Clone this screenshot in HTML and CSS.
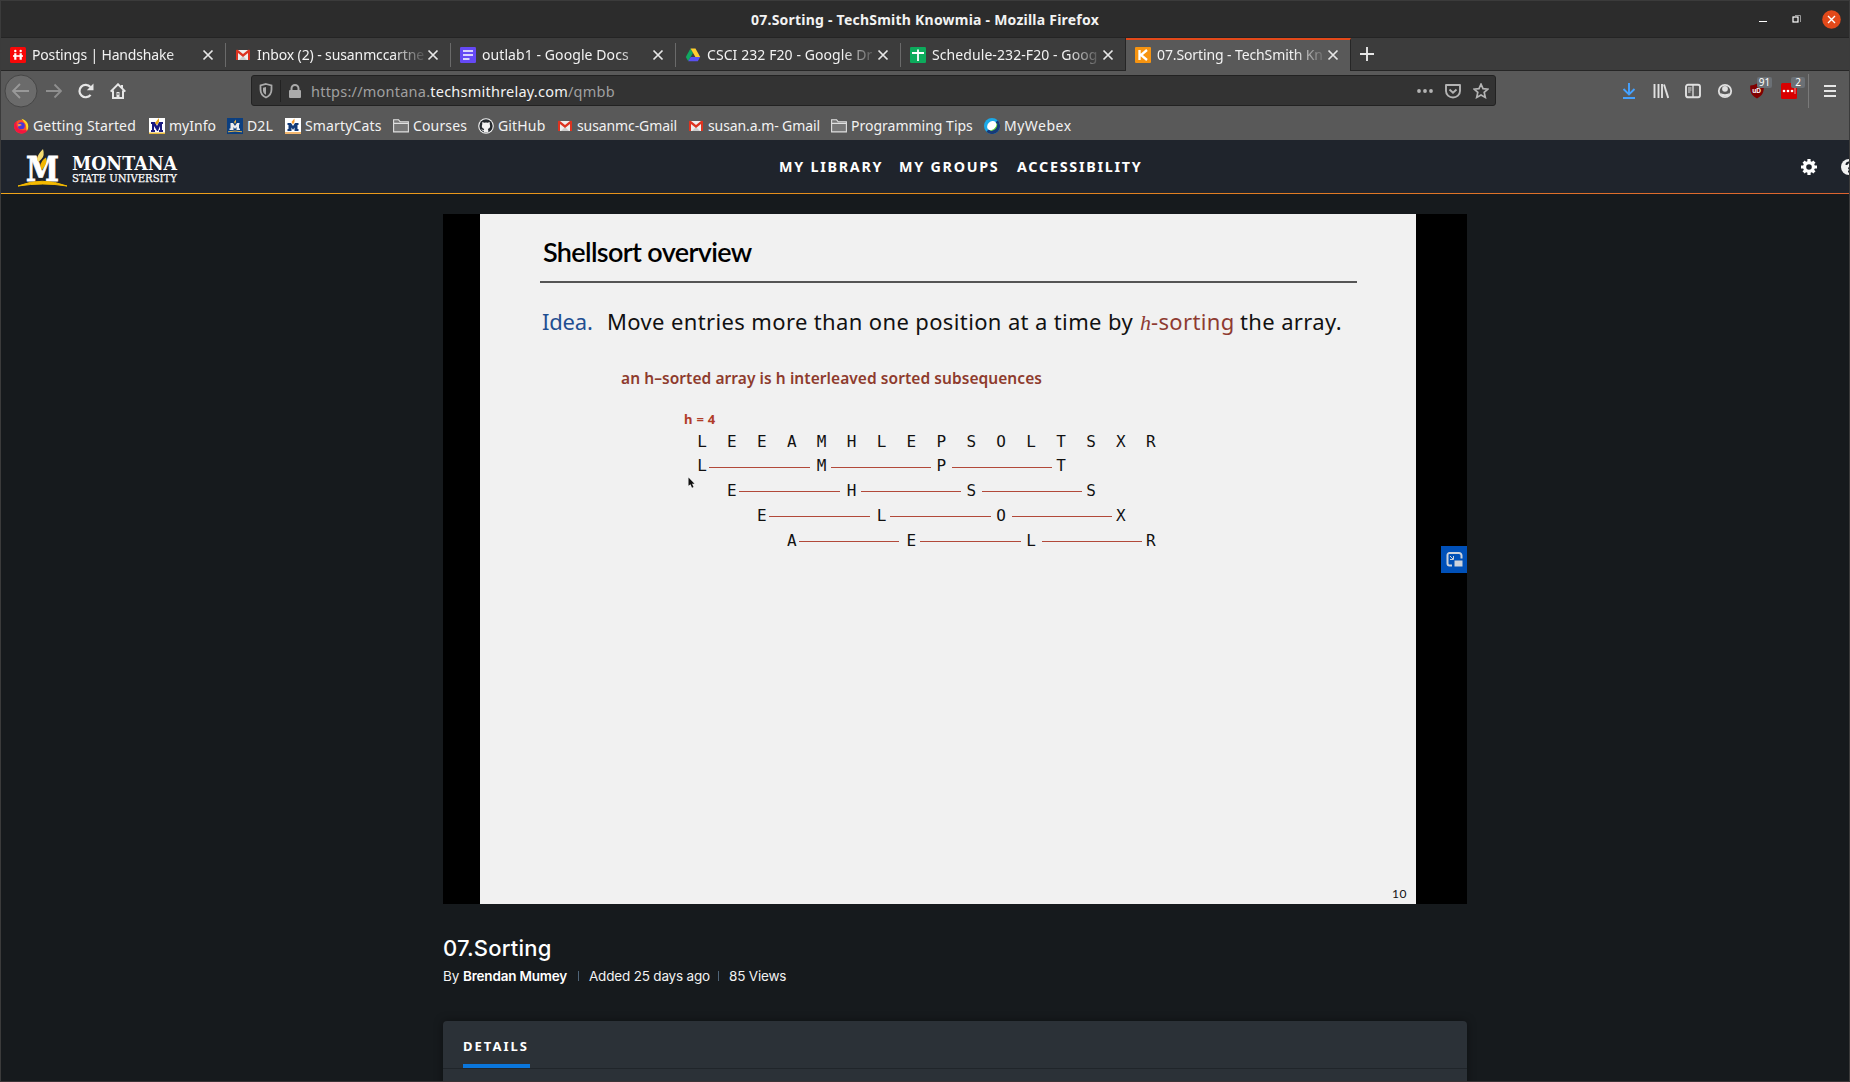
FILE: index.html
```html
<!DOCTYPE html>
<html lang="en">
<head>
<meta charset="utf-8">
<title>07.Sorting - TechSmith Knowmia</title>
<link rel="stylesheet" href="styles.css">
</head>
<body>
<svg class="defs" width="0" height="0" aria-hidden="true">
  <symbol id="close" viewBox="0 0 12 12"><path d="M1.5 1.5l9 9M10.5 1.5l-9 9" stroke="#e6e6e6" stroke-width="1.7" fill="none"/></symbol>
  <symbol id="gmail" viewBox="0 0 16 16"><path d="M2 3h12v10H2z" fill="#eee"/><path d="M4 13l4-4 4 4z" fill="#ccc"/><path d="M1 3.5C1 2.5 2.2 2.4 3 3l5 4 5-4c.8-.6 2-.5 2 .5V13h-2V6L8 10 3 6v7H1z" fill="#dd3320"/></symbol>
  <symbol id="folder" viewBox="0 0 16 16"><path d="M.6 13.9V1.8h5l1.6 2h8.2v10.1zM.6 5.4h14.8" fill="#fff" fill-opacity=".18" stroke="#e0e0e0" stroke-width="1.1"/></symbol>
</svg>

<div class="titlebar">
  <span class="t window-title">07.Sorting - TechSmith Knowmia - Mozilla Firefox</span>
  <div class="window-buttons">
    <svg width="8" height="10"><path d="M0 7.5h8" stroke="#fff"/></svg>
    <svg width="9" height="10"><path d="M3 1.5h5.5V8" stroke="#999" fill="none"/><rect x="1" y="3" width="5" height="5" fill="none" stroke="#fff" stroke-width="1.2"/></svg>
    <svg width="19" height="19"><circle cx="9.5" cy="9.5" r="9.3" fill="#e2491a"/><path d="M6 6l7 7M13 6l-7 7" stroke="#fff" stroke-width="1.4"/></svg>
  </div>
</div>

<div class="tabs">
  <div class="tab"><svg class="fav" viewBox="0 0 16 16"><rect width="16" height="16" rx="1.5" fill="#f80808"/><path d="M5.300 6.300v6.500M10.700 6.300v6.500" stroke="#fff" stroke-width="2.200"/><path d="M3 9h10" stroke="#fff" stroke-width="1.600"/><circle cx="5.300" cy="4" r="1.200" fill="#fff"/><circle cx="10.700" cy="4" r="1.200" fill="#fff"/></svg><span class="label"><span class="t">Postings | Handshake</span></span><svg class="x"><use href="#close"/></svg></div>
  <div class="tab"><svg class="fav"><use href="#gmail"/></svg><span class="label"><span class="t">Inbox (2) - susanmccartne</span></span><svg class="x"><use href="#close"/></svg></div>
  <div class="tab"><svg class="fav" viewBox="0 0 16 16"><rect width="16" height="16" rx="1.2" fill="#6549f5"/><path d="M3 4h10M3 8h10M3 12h6.5" stroke="#fff" stroke-width="1.7"/></svg><span class="label"><span class="t">outlab1 - Google Docs</span></span><svg class="x"><use href="#close"/></svg></div>
  <div class="tab"><svg class="fav" viewBox="0 0 16 16"><path d="M5.5 1.5L.8 10l2.4 4.3L8 6z" fill="#11a861"/><path d="M5.5 1.5h5L15.2 10h-4.8z" fill="#ffce2e"/><path d="M5.7 10h9.5l-2.4 4.3H3.2z" fill="#5a50f0"/></svg><span class="label"><span class="t">CSCI 232 F20 - Google Dr</span></span><svg class="x"><use href="#close"/></svg></div>
  <div class="tab plain"><svg class="fav" viewBox="0 0 16 16"><rect width="16" height="16" rx="1.2" fill="#0cab5c"/><path d="M2 6h12M8 2.5v11.5" stroke="#fff" stroke-width="1.8"/></svg><span class="label"><span class="t">Schedule-232-F20 - Goog</span></span><svg class="x"><use href="#close"/></svg></div>
  <div class="tab active"><svg class="fav" viewBox="0 0 16 16"><rect width="16" height="16" rx="1" fill="#f79410"/><path d="M4.500 3v10M12 3L6 8l6 5" stroke="#fff" stroke-width="2.300" fill="none"/></svg><span class="label"><span class="t">07.Sorting - TechSmith Kn</span></span><svg class="x"><use href="#close"/></svg></div>
  <svg class="plus" width="14" height="14"><path d="M7 0v14M0 7h14" stroke="#e6e6e6" stroke-width="1.9"/></svg>
</div>

<div class="toolbar">
  <div class="nav-buttons">
    <svg class="back" width="34" height="34"><circle cx="17" cy="17" r="16" fill="#6b6b6b" stroke="#464646"/><path d="M25 17H10M16 10l-7 7 7 7" fill="none" stroke="#999" stroke-width="1.8"/></svg>
    <svg width="16" height="16"><path d="M0 8h14M8.500 1.500L15 8l-6.500 6.500" fill="none" stroke="#8f8f8f" stroke-width="1.800"/></svg>
    <svg class="reload" width="16" height="16"><path d="M12.600 11.800A6.200 6.200 0 1 1 12.400 4" fill="none" stroke="#e6e6e6" stroke-width="2.200"/><path d="M15.500.5v6.700H8.800z" fill="#e6e6e6"/></svg>
    <svg class="home" width="16" height="16"><path d="M.7 8.600L8 1.300l7.300 7.300M3 7.500V15h10V7.500" fill="none" stroke="#e6e6e6" stroke-width="2"/><path d="M11 2h2v3h-2zM6.500 9h3v6h-3z" fill="#e6e6e6"/><path d="M7.500 10h1v2h-1z" fill="#595959"/></svg>
  </div>
  <div class="urlbar">
    <svg class="shield" width="14" height="16"><path d="M7 1l5.500 1.500v4c0 4-2 6.500-5.500 8-3.500-1.500-5.500-4-5.500-8v-4z" fill="none" stroke="#aaa" stroke-width="1.800"/><path d="M7 4l-3 .8v2.500c0 2 1 3.500 3 4.500z" fill="#aaa"/></svg>
    <span class="url-sep"></span>
    <svg class="lock" width="12" height="14"><rect y="6" width="12" height="8" rx="1" fill="#aaa"/><path d="M2.500 7V4.500a3.500 3.500 0 0 1 7 0V7" fill="none" stroke="#aaa" stroke-width="2"/></svg>
    <span class="url"><span class="t">https://montana.</span><span class="t host">techsmithrelay.com</span><span class="t">/qmbb</span></span>
    <div class="url-actions">
      <svg width="16" height="6"><circle cx="2" cy="3" r="1.900" fill="#b4b4b4"/><circle cx="8" cy="3" r="1.900" fill="#b4b4b4"/><circle cx="14" cy="3" r="1.900" fill="#b4b4b4"/></svg>
      <svg width="16" height="16"><path d="M1 2h14v6a7 6.500 0 0 1-14 0z" fill="none" stroke="#b4b4b4" stroke-width="1.900" stroke-linejoin="round"/><path d="M4.500 6.500L8 9.700l3.500-3.200" fill="none" stroke="#b4b4b4" stroke-width="1.900"/></svg>
      <svg width="16" height="16"><path d="M8 1.200l2 4.500 4.900.5-3.700 3.200 1.100 5L8 12l-4.300 2.400 1.100-5L1.100 6.200 6 5.700z" fill="none" stroke="#b4b4b4" stroke-width="1.700"/></svg>
    </div>
  </div>
  <div class="tools">
    <svg class="tool" viewBox="0 0 16 16"><path d="M8 0v11M2.500 6L8 11.500 13.500 6M2 15h12" fill="none" stroke="#45a1ff" stroke-width="1.900"/></svg>
    <svg class="tool" viewBox="0 0 16 16"><path d="M1.500 1v14M5.500 1v14M9 1v14" stroke="#e0e0e0" stroke-width="1.900"/><path d="M11 1.500L15.200 15" stroke="#e0e0e0" stroke-width="1.900"/></svg>
    <svg class="tool" viewBox="0 0 16 16"><rect x="1" y="1.800" width="14" height="12.500" rx="2" fill="none" stroke="#e0e0e0" stroke-width="1.900"/><path d="M8 2v12" stroke="#e0e0e0" stroke-width="1.300"/><path d="M3 5h3.500M3 7h3.500M3 9h2.500" stroke="#e0e0e0"/></svg>
    <svg class="tool" viewBox="0 0 16 16"><circle cx="8" cy="8" r="6.200" fill="none" stroke="#e0e0e0" stroke-width="1.800"/><circle cx="8" cy="5.800" r="2.900" fill="#e0e0e0"/><path d="M3 9.500c2 2.300 8 2.300 10 0L11 13.500H5z" fill="#e0e0e0"/></svg>
    <div class="ext"><svg class="tool" viewBox="0 0 16 16"><path d="M8 .5c2 1.300 4.500 2 6.800 2 .3 6-1 10-6.800 13C2.200 12.500.9 8.500 1.200 2.500 3.500 2.500 6 1.800 8 .5z" fill="#800000"/><text x="3.200" y="9.800" font-size="6.500" font-weight="bold" fill="#fff" font-family="Inter, sans-serif">uD</text></svg><span class="count">91</span></div>
    <div class="ext"><svg class="tool" viewBox="0 0 16 16"><rect width="16" height="16" rx="1.500" fill="#d80000"/><circle cx="3" cy="8" r="1.300" fill="#fff"/><circle cx="7" cy="8" r="1.300" fill="#fff"/><circle cx="11" cy="8" r="1.300" fill="#fff"/><path d="M14 5v6" stroke="#fff" stroke-opacity=".6"/></svg><span class="count two">2</span></div>
    <span class="tools-sep"></span>
    <svg class="menu" width="12" height="14"><path d="M0 2h12M0 7h12M0 12h12" stroke="#e6e6e6" stroke-width="1.900"/></svg>
  </div>
</div>

<div class="bookmarks">
  <div><svg class="fav" viewBox="0 0 16 16"><circle cx="8.200" cy="8.700" r="6.900" fill="#ff4f2a"/><path d="M1.500 5c-1.500 5 1 10 6.500 10.500 4.500.3 7-2.500 7.400-6C14 13 9 13 6 11 3.500 9 3 6 4 3z" fill="#f5153f"/><path d="M8.500.8c6 1.500 8.500 7 5.500 12-1 .8 0-5-2-7.500z" fill="#ffd926"/><circle cx="8.300" cy="7.800" r="3.500" fill="#4a36d8"/><path d="M4.800 6.500c2-.8 3.500-.3 4 .8-1.500 0-2 1.200-3.500 1.200z" fill="#ff9640"/></svg><span class="t">Getting Started</span></div>
  <div><svg class="fav" viewBox="0 0 16 16"><rect width="16" height="16" fill="#fff"/><path d="M2 4h4l2 4 2-4h4v2h-1v6h1v2h-4v-2h1V8l-2 5H8L5 8v4h1v2H2v-2h1V6H2z" fill="#1c1c80"/><path d="M6 5l4-5v4L8 7z" fill="#eba91a"/><path d="M0 14.500h16V16H0z" fill="#e7b83c"/></svg><span class="t">myInfo</span></div>
  <div><svg class="fav" viewBox="0 0 16 16"><rect width="16" height="16" fill="#0b3f80"/><path d="M3.500 5H6l2 3 2-3h2.500v1.500H12v4h1V12H9.500V9L8 11 6.500 9v3h-4v-1.500h1v-4z" fill="#eee"/><path d="M7 4l2-2.500V4L8 6z" fill="#f0b23c"/><path d="M1 13.800q7-1.500 14 0" stroke="#e0b048" fill="none"/></svg><span class="t">D2L</span></div>
  <div><svg class="fav" viewBox="0 0 16 16"><rect width="16" height="16" fill="#fff"/><path d="M2.500 5H6l2 3 2-3h3.500v2h-1v4h1v2H9.500V9.500L8 12 6.500 9.500V13h-4v-2h1V7h-1z" fill="#123a78"/><path d="M6.500 4l3-3.500V4L8 6.500z" fill="#f29b30"/><path d="M0 15h16" stroke="#f0a040" stroke-width="1.500"/></svg><span class="t">SmartyCats</span></div>
  <div><svg class="fav"><use href="#folder"/></svg><span class="t">Courses</span></div>
  <div><svg class="fav" viewBox="0 0 16 16"><circle cx="8" cy="8" r="7.800" fill="#f2f2f2"/><circle cx="8" cy="8" r="6.700" fill="#24292e"/><path d="M5.800 14.500v-1.800c-1.500.3-2-.7-2.500-1.500 1.200 0 1.300 1 2.500.7l.4-1C4 10.500 3.300 8.500 4.200 6.500L4.300 4l2 .8a6 6 0 0 1 3.400 0l2-.8.1 2.500c.9 2 .2 4-2 4.400.4.500.5 1 .5 1.600v2z" fill="#f2f2f2"/></svg><span class="t">GitHub</span></div>
  <div><svg class="fav"><use href="#gmail"/></svg><span class="t">susanmc-Gmail</span></div>
  <div><svg class="fav"><use href="#gmail"/></svg><span class="t">susan.a.m- Gmail</span></div>
  <div><svg class="fav"><use href="#folder"/></svg><span class="t">Programming Tips</span></div>
  <div><svg class="fav" viewBox="0 0 16 16"><circle cx="8" cy="8" r="8" fill="#1ba9e8"/><path d="M13.700 2.300A8 8 0 0 1 2.300 13.700z" fill="#163a78"/><path d="M13 5c1 4-2 8-7 8z" fill="#6adb35"/><ellipse cx="7.800" cy="7.600" rx="5.200" ry="4.100" transform="rotate(-45 7.800 7.600)" fill="#fff"/><path d="M12.600 6.500c.5 3.500-3 6.500-6.500 5.600 3.500 0 6-2.500 6.500-5.600z" fill="#59cf3a"/></svg><span class="t">MyWebex</span></div>
</div>

<header class="site-header">
  <svg class="logo" width="162" height="44" viewBox="0 0 162 44">
    <text x="10" y="36" font-family="DejaVu Serif, serif" font-weight="bold" font-size="34" textLength="33" lengthAdjust="spacingAndGlyphs" fill="#fff" stroke="#fff" stroke-width=".8">M</text>
    <path d="M21 15q0-5 6-11 2 7-1.500 10L22.500 17z" fill="#f4dc70"/><path d="M24.500 21q0-5 5.500-8.500 1.500 5-1.500 9l-3 4z" fill="#f2b600"/>
    <path d="M2 41q24-9.500 49 0-24-4-49 0z" fill="#f5ba00" stroke="#f5ba00"/>
    <text x="56" y="25" font-family="DejaVu Serif, serif" font-weight="bold" font-size="19" textLength="105" lengthAdjust="spacingAndGlyphs" fill="#fff">MONTANA</text>
    <text x="56" y="36.500" font-family="DejaVu Serif, serif" font-size="11.500" textLength="105" lengthAdjust="spacingAndGlyphs" fill="#fff" stroke="#fff" stroke-width=".25">STATE UNIVERSITY</text>
  </svg>
  <nav class="site-nav"><a class="t">MY LIBRARY</a><a class="t">MY GROUPS</a><a class="t">ACCESSIBILITY</a></nav>
  <div class="site-tools">
    <svg width="16" height="16" viewBox="0 0 16 16"><circle cx="8" cy="8" r="4.400" fill="none" stroke="#fff" stroke-width="3.200"/><path stroke="#fff" stroke-width="3.200" d="M8 0v3M8 13v3M0 8h3M13 8h3M2.600 2.600l1.800 1.800M11.600 11.600l1.800 1.800M13.400 2.600l-1.800 1.800M4.400 11.600l-1.800 1.800"/></svg>
    <svg width="16" height="16" viewBox="0 0 16 16"><circle cx="8" cy="8" r="8" fill="#f2f2f2"/><path d="M5.500 6a2.500 2.500 0 1 1 3.700 2.200Q8 8.700 8 10.200M8 11.500v2" fill="none" stroke="#1f242c" stroke-width="2"/></svg>
  </div>
</header>

<main class="page">
  <section class="video">
    <div class="slide">
      <h1 class="slide-title"><span class="t">Shellsort overview</span></h1>
      <p class="idea"><span class="t blue">Idea.</span><span class="t">Move entries more than one position at a time by</span><span class="red"><i>h</i><span class="t">-sorting</span></span><span class="t">the array.</span></p>
      <p class="note"><span class="t">an h–sorted array is h interleaved sorted subsequences</span></p>
      <p class="step"><span class="t">h = 4</span></p>
      <div class="array"><b>L</b><b>E</b><b>E</b><b>A</b><b>M</b><b>H</b><b>L</b><b>E</b><b>P</b><b>S</b><b>O</b><b>L</b><b>T</b><b>S</b><b>X</b><b>R</b></div>
      <div class="array r1"><b>L</b><hr><b>M</b><hr><b>P</b><hr><b>T</b></div>
      <div class="array r2"><b>E</b><hr><b>H</b><hr><b>S</b><hr><b>S</b></div>
      <div class="array r3"><b>E</b><hr><b>L</b><hr><b>O</b><hr><b>X</b></div>
      <div class="array r4"><b>A</b><hr><b>E</b><hr><b>L</b><hr><b>R</b></div>
      <span class="page-no">10</span>
    </div>
    <svg class="pointer" width="7" height="12" viewBox="0 0 7 12"><path d="M.5.500v8.200l2-1.500 1.500 3.500 1.500-.7L4 6.700h2.500z" fill="#111"/></svg>
    <div class="pip"><svg width="17" height="15" viewBox="0 0 17 15"><path d="M6 13.500H3.500a2 2 0 0 1-2-2V3a2 2 0 0 1 2-2H13a2.500 2.500 0 0 1 2.500 2.500V6.500" fill="none" stroke="#ccd2dc" stroke-width="2"/><rect x="8.500" y="8.500" width="8" height="6" fill="#ccd2dc"/><path d="M4 4l3 3M7.500 4v3.500H4" fill="none" stroke="#ccd2dc"/></svg></div>
  </section>
  <h2 class="video-title"><span class="t">07.Sorting</span></h2>
  <div class="meta"><span class="t m1">By</span><span class="t m2">Brendan Mumey</span><i class="bar"></i><span class="t m3">Added 25 days ago</span><i class="bar"></i><span class="t">85 Views</span></div>
  <section class="card"><div class="card-tabs"><span class="card-tab">DETAILS</span></div></section>
</main>
</body>
</html>
```
FILE: styles.css
```css
* { box-sizing: border-box; }
body { margin: 0; width: 1850px; height: 1082px; overflow: hidden; position: relative; display: flex; flex-direction: column; background: #161a1d; border: 1px solid #3b3b3b; border-bottom-color: #3a3336; font-family: "Noto Sans", sans-serif; font-size: 14px; color: #f2f2f2; }
svg { display: block; flex: none; }
.defs { position: absolute; }
.t { white-space: pre; }
.fav { width: 16px; height: 16px; }

.titlebar { height: 37px; flex: none; display: grid; grid-template-columns: 750px 1fr auto; align-items: center; background: #2c2c2c; border-bottom: 1px solid #242424; }
.window-title { grid-column: 2; font-weight: 700; letter-spacing: .228px; padding-top: 1px; }
.window-buttons { display: flex; align-items: center; gap: 25px; padding-right: 8px; }
.window-buttons svg:last-child { margin-left: -4px; }

.tabs { height: 33px; flex: none; display: flex; background: #3c3c3c; border-bottom: 1px solid #262626; }
.tab { width: 225px; height: 33px; display: flex; align-items: center; padding-left: 9px; letter-spacing: .08px; }
.tab:nth-child(1) { letter-spacing: -.168px; }
.tab:nth-child(2), .tab:nth-child(6) { letter-spacing: -.11px; }
.tab .label { width: 168px; margin-left: 6px; -webkit-mask-image: linear-gradient(90deg, #000 136px, transparent 171px); mask-image: linear-gradient(90deg, #000 136px, transparent 171px); }
.tab .x { width: 12px; height: 12px; margin-left: 2px; }
.tab::after { content: ""; width: 1px; height: 24px; background: #6a6a6a; margin-left: auto; }
.tab.plain::after { display: none; }
.tab.active { background: #595959; border-top: 2px solid #e2491a; border-right: 1px solid #262626; box-shadow: -1px 0 #262626; padding-bottom: 2px; }
.tab.active::after { display: none; }
.plus { margin: 9px; }

.toolbar { height: 39px; flex: none; display: flex; align-items: center; background: #595959; }
.nav-buttons { display: flex; align-items: center; width: 250px; padding-left: 3px; }
.nav-buttons svg + svg { margin-left: 8px; }
.nav-buttons svg.reload { margin-left: 16px; }
.nav-buttons svg.home { margin-left: 16px; }
.urlbar { width: 1245px; height: 31px; display: flex; align-items: center; background: #333; border: 1px solid #222; border-radius: 3px; }
.shield { margin-left: 7px; }
.url-sep { width: 1px; height: 22px; margin: 0 8px 0 7px; background: #222; }
.url { display: flex; margin-left: 10px; font-size: 14.5px; letter-spacing: .23px; color: #a0a0a0; }
.host { color: #f2f2f2; }
.url-actions { display: flex; align-items: center; gap: 12px; margin-left: auto; padding-right: 6px; }
.tools { display: flex; align-items: center; gap: 16px; margin-left: 125px; }
.tool { width: 16px; height: 16px; }
.ext { position: relative; }
.count { position: absolute; left: 8px; top: -6px; width: 15px; height: 11px; font-size: 10px; line-height: 11px; text-align: center; background: #6b7075; border-radius: 2px; color: #fff; }
.count.two { left: 10px; width: 14px; }
.tools-sep { width: 1px; height: 34px; margin: 0 -1px 0 -5px; background: #7a7a7a; }

.bookmarks { height: 30px; flex: none; display: grid; grid-template-columns: 136px 78px 58px 108px 85px 79px 131px 143px 153px auto; background: #595959; padding: 1px 0 0 12px; justify-content: start; letter-spacing: .15px; }
.bookmarks div { display: flex; align-items: center; gap: 4px; }
.bookmarks div:nth-child(2), .bookmarks div:nth-child(9) { letter-spacing: 0; }
.bookmarks div:nth-child(7), .bookmarks div:nth-child(8) { letter-spacing: -.096px; }
.bookmarks div:last-child { letter-spacing: .5px; }

.site-header { height: 54px; flex: none; display: flex; align-items: center; overflow: hidden; background: #1f242c; border-bottom: 1px solid; border-image: linear-gradient(90deg, #f0a51a, #e28a1c 50%, #dc6430) 1; }
.logo { margin-left: 15px; }
.site-nav { display: flex; margin-left: 601px; font-size: 14.3px; font-weight: 700; letter-spacing: 1.75px; color: #fff; }
.site-nav a { width: 120px; }
.site-nav a:nth-child(2) { width: 118px; }
.site-tools { display: flex; gap: 24px; margin-left: auto; margin-right: -8px; }

.page { padding: 20px 0 0 442px; width: 1466px; }
.video { position: relative; height: 690px; background: #000; padding: 0 51px 0 37px; }
.slide { position: relative; height: 690px; padding: 18px 59px 0 60px; background: #f1f1f1; color: #111; }
.slide-title { margin: 0 0 9px; padding-left: 3px; font: 600 27px/40px Lato, sans-serif; letter-spacing: -.65px; color: #000; }
.idea { margin: 0; padding: 20px 0 0 2px; border-top: 2px solid #555; display: grid; grid-template-columns: 65px 533px 100px auto; font-size: 22px; line-height: 36px; letter-spacing: .367px; width: 817px; white-space: nowrap; }
.blue { color: #1f4f91; letter-spacing: -.2px; }
.red { color: #8e3b31; }
.red i { display: inline-block; width: 11px; font-family: "Liberation Serif", serif; }
.note { margin: 24.5px 0 0; padding-left: 81px; font-size: 15.5px; line-height: 24px; font-weight: 600; letter-spacing: .063px; color: #8e3b2d; }
.step { margin: 19px 0 1px; padding-left: 144px; font-size: 13px; line-height: 20px; font-weight: 700; letter-spacing: .3px; color: #b03c28; }
.array { display: grid; grid-template-columns: repeat(16, 29.93px); height: 24.8px; line-height: 24.8px; margin-left: 147px; font-family: "DejaVu Sans Mono", monospace; font-size: 16px; }
.array b { font-weight: 400; text-align: center; }
.array hr { grid-column: span 3; align-self: center; margin: 1px -3px 0 -8px; border: 0; height: 1px; background: #b2493a; }
.array hr:nth-child(4) { margin-left: -6px; margin-right: -5px; }
.array hr:nth-child(6) { margin-left: -4.5px; margin-right: -6px; }
.r2 b:first-child { grid-column: 2; }
.r3 b:first-child { grid-column: 3; }
.r4 b:first-child { grid-column: 4; }
.page-no { position: absolute; right: 9px; bottom: 2px; font: 12px/16px Lato, sans-serif; letter-spacing: .6px; }
.pointer { position: absolute; left: 245px; top: 263px; }
.pip { position: absolute; right: 0; top: 332px; width: 26px; height: 27px; display: grid; place-items: center; background: #0050b8; }
.video-title { margin: 27px 0 0; font: 500 22px/34px Inter, sans-serif; letter-spacing: .2px; color: #fff; }
.meta { display: flex; align-items: center; font: 13.5px/22px Inter, sans-serif; letter-spacing: -.19px; }
.m1 { width: 20px; }
.m2 { font-weight: 600; width: 115px; color: #fff; }
.m3 { width: 129px; }
.bar { width: 1px; height: 10px; background: #4f6478; margin-right: 10px; }
.card { margin-top: 34px; height: 70px; background: #2b3137; border-radius: 4px 4px 0 0; box-shadow: 0 0 10px rgba(0,0,0,.4); }
.card-tabs { display: flex; height: 48px; padding-left: 20px; border-bottom: 1px solid #20252a; }
.card-tab { width: 67px; height: 47px; padding-top: 15px; border-bottom: 4px solid #0a76dc; font: 700 13px/20px "Noto Sans", sans-serif; letter-spacing: 2px; white-space: nowrap; color: #fff; }
```
